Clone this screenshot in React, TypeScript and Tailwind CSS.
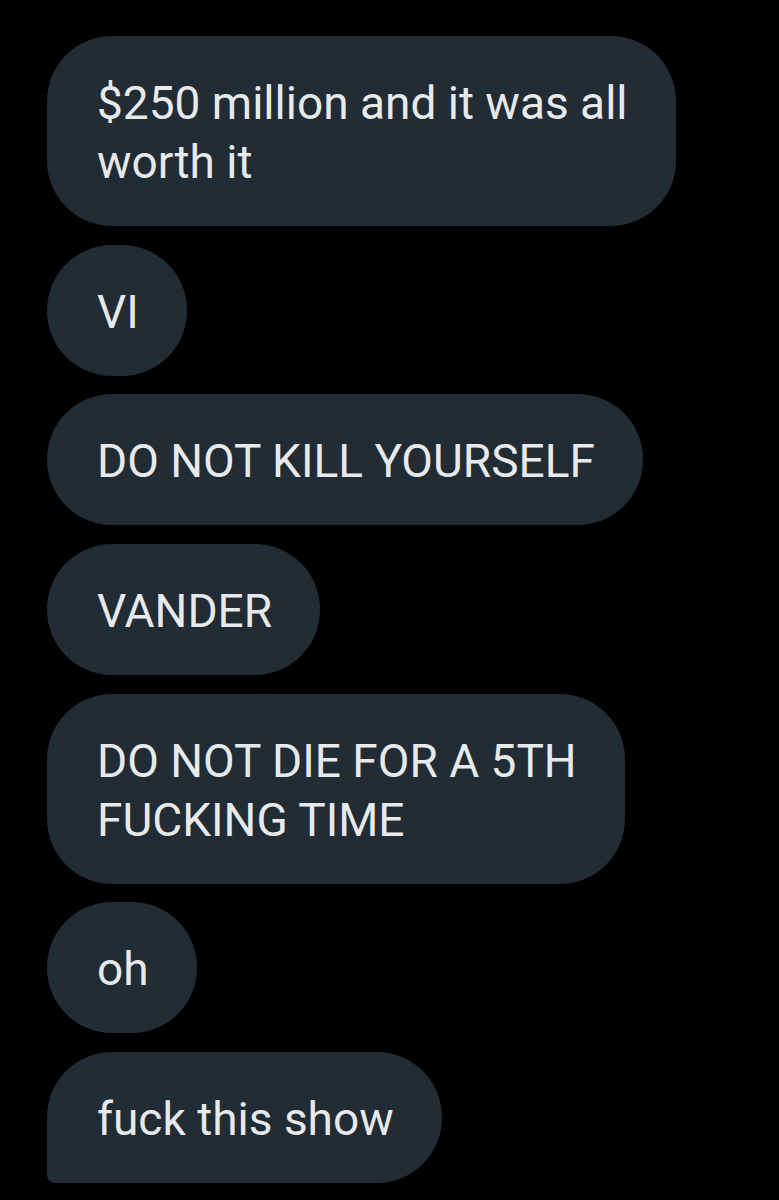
import React from "react";

const msgs: { lines: string[]; last?: boolean }[] = [
  { lines: ["$250 million and it was all", "worth it"] },
  { lines: ["VI"] },
  { lines: ["DO NOT KILL YOURSELF"] },
  { lines: ["VANDER"] },
  { lines: ["DO NOT DIE FOR A 5TH", "FUCKING TIME"] },
  { lines: ["oh"] },
  { lines: ["fuck this show"], last: true },
];

export default function App() {
  return (
    <div
      className="w-[779px] h-[1200px] bg-black overflow-hidden pt-[36px] pl-[47px] flex flex-col items-start gap-[18.7px]"
      style={{ fontFamily: "Roboto, 'Noto Sans', sans-serif" }}
    >
      {msgs.map((m, i) => (
        <div
          key={i}
          className={
            "w-fit whitespace-nowrap bg-[#212c34] text-[#e7e9ea] text-[46px] leading-[59px] pl-[50px] pr-[48px] pt-[38px] pb-[34px] " +
            (m.last ? "rounded-[65px] rounded-bl-[8px]" : "rounded-[65px]")
          }
        >
          {m.lines.map((l, j) => (
            <div key={j}>{l}</div>
          ))}
        </div>
      ))}
    </div>
  );
}
